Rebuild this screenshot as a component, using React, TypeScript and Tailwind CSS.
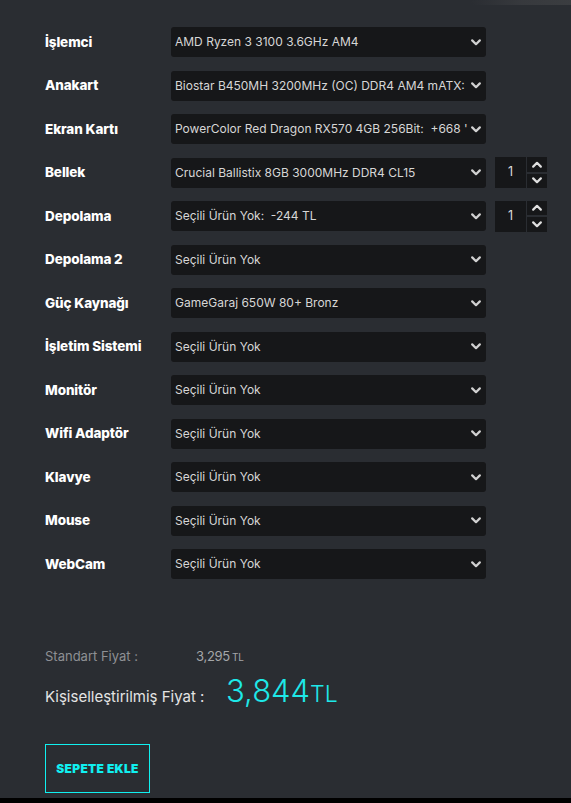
import React from "react";

const rows: { label: string; value: string; qty?: boolean }[] = [
  { label: "İşlemci", value: "AMD Ryzen 3 3100 3.6GHz AM4" },
  { label: "Anakart", value: "Biostar B450MH 3200MHz (OC) DDR4 AM4 mATX:" },
  { label: "Ekran Kartı", value: "PowerColor Red Dragon RX570 4GB 256Bit:  +668 '" },
  { label: "Bellek", value: "Crucial Ballistix 8GB 3000MHz DDR4 CL15", qty: true },
  { label: "Depolama", value: "Seçili Ürün Yok:  -244 TL", qty: true },
  { label: "Depolama 2", value: "Seçili Ürün Yok" },
  { label: "Güç Kaynağı", value: "GameGaraj 650W 80+ Bronz" },
  { label: "İşletim Sistemi", value: "Seçili Ürün Yok" },
  { label: "Monitör", value: "Seçili Ürün Yok" },
  { label: "Wifi Adaptör", value: "Seçili Ürün Yok" },
  { label: "Klavye", value: "Seçili Ürün Yok" },
  { label: "Mouse", value: "Seçili Ürün Yok" },
  { label: "WebCam", value: "Seçili Ürün Yok" },
];

function Chevron({ up = false, className = "" }: { up?: boolean; className?: string }) {
  return (
    <svg width="10" height="7" viewBox="0 0 10 7" className={className}>
      <path
        d={up ? "M1.2 5.6 L5 1.8 L8.8 5.6" : "M1.2 1.4 L5 5.2 L8.8 1.4"}
        fill="none"
        stroke="currentColor"
        strokeWidth="2.2"
        strokeLinecap="round"
        strokeLinejoin="round"
      />
    </svg>
  );
}

export default function App() {
  return (
    <div
      className="relative w-[571px] h-[803px] bg-[#2a2d32] overflow-hidden"
      style={{ fontFamily: "Inter, 'Noto Sans', sans-serif" }}
    >
      <div className="absolute right-0 top-0 w-[100px] h-[5px] bg-gradient-to-r from-[#2a2d32] via-[#3a3c40] to-[#3f4144] opacity-80" />
      <div className="pl-[45px] pt-[27px] flex flex-col gap-[13.5px]">
        {rows.map((r) => (
          <div key={r.label} className="flex items-center h-[30px]">
            <div className="w-[126px] text-[13.5px] font-extrabold text-white tracking-[-0.1px]">{r.label}</div>
            <div className="w-[315px] h-[30px] bg-[#161719] rounded-[3px] flex items-center pl-[4px] pr-[5px] overflow-hidden">
              <span className="flex-1 whitespace-pre overflow-hidden text-[12px] text-[#d6d6d6] pr-[4px]">{r.value}</span>
              <Chevron className="text-[#d0d0d0] ml-[2px] shrink-0" />
            </div>
            {r.qty && (
              <div className="flex ml-[9px] h-[31px] gap-[1px]">
                <div className="w-[31px] h-full bg-[#161719] flex items-center justify-center text-[12.5px] text-[#dcdcdc]">1</div>
                <div className="flex flex-col gap-[2px] w-[20px]">
                  <div className="flex-1 bg-[#161719] flex items-center justify-center text-[#e0e0e0]">
                    <Chevron up />
                  </div>
                  <div className="flex-1 bg-[#161719] flex items-center justify-center text-[#e0e0e0]">
                    <Chevron />
                  </div>
                </div>
              </div>
            )}
          </div>
        ))}
      </div>

      <div className="pl-[45px] mt-[68px] flex items-baseline text-[13px] text-[#8e9094]">
        <span className="w-[151px]">Standart Fiyat :</span>
        <span className="text-[13px] text-[#a4a6a9] tracking-[-0.3px]">3,295</span>
        <span className="text-[10px] text-[#a4a6a9] ml-[2px]">TL</span>
      </div>
      <div className="pl-[45px] mt-[8px] flex items-baseline text-[#e4e4e4]">
        <span className="text-[15px] w-[181px]">Kişiselleştirilmiş Fiyat :</span>
        <span className="text-[31px] text-[#1ee8e8] font-light leading-none">3,844</span>
        <span className="text-[23px] text-[#1ee8e8] font-light leading-none">TL</span>
      </div>

      <div className="pl-[45px] mt-[36px]">
        <div className="w-[105px] h-[49px] border border-[#10f0f0] flex items-center justify-center">
          <span className="text-[12px] font-black text-[#10f0f0] tracking-[0.3px]">SEPETE EKLE</span>
        </div>
      </div>

      <div className="absolute left-0 right-0 bottom-0 h-[5px] bg-black" />
    </div>
  );
}
